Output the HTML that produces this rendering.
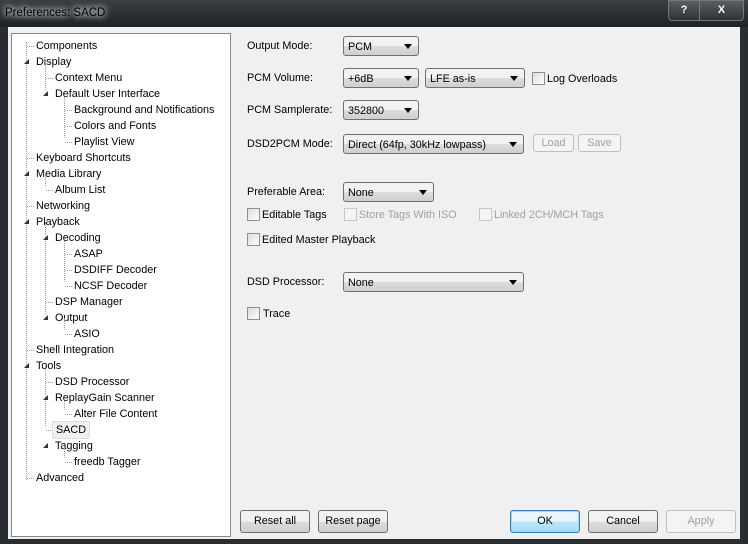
<!DOCTYPE html><html><head><style>
body{margin:0;width:748px;height:544px;overflow:hidden;background:#2a2d30;font-family:"Liberation Sans",sans-serif;font-size:10.8px;color:#000;position:relative}
.a{position:absolute;white-space:nowrap}
#title{left:0;top:0;width:748px;height:27px;background:linear-gradient(#3b3f44,#1e2124)}
#client{left:8px;top:27px;width:732px;height:512px;background:#f0f0f0}
#tree{left:11px;top:33px;width:218px;height:502px;background:#fff;border:1px solid #828790}
.t{position:absolute;white-space:nowrap;line-height:16px;height:16px}
.dv{position:absolute;border-left:1px dotted #999;width:0}
.dh{position:absolute;border-top:1px dotted #999;height:0}
.tri{position:absolute;width:0;height:0;border-left:5px solid transparent;border-bottom:5px solid #333}
.cb{position:absolute;width:11px;height:11px;border:1px solid #8e8f8f;background:linear-gradient(135deg,#dcdcdc,#fff)}
.cbd{border-color:#c8c8c8;background:#f4f4f4}
.dd{position:absolute;height:20px;border:1px solid #707070;border-radius:3px;background:linear-gradient(#f2f2f2 50%,#dddddd 50%,#cfcfcf);box-sizing:border-box;padding-left:4px;line-height:20px}
.dd:after{content:"";position:absolute;right:6px;top:7px;border-left:4px solid transparent;border-right:4px solid transparent;border-top:5px solid #000}
.btn{position:absolute;height:23px;border:1px solid #707070;border-radius:3px;background:linear-gradient(#f2f2f2 50%,#dddddd 50%,#cfcfcf);box-sizing:border-box;text-align:center;line-height:21px}
.dis{color:#a0a0a0;border-color:#c0c0c0;background:#f4f4f4}
</style></head><body>
<div class="a" id="title"></div>
<div class="a" style="left:5px;top:7px;color:#000;font-size:11.5px;text-shadow:0 0 6px #fff,0 0 8px #fff">Preferences: SACD</div>
<div class="a" style="left:668px;top:0;width:30px;height:19px;border:1px solid #777;border-radius:0 0 0 4px;background:linear-gradient(#5a5e63,#2f3236);color:#fff;text-align:center;font-weight:bold;line-height:18px">?</div>
<div class="a" style="left:699px;top:0;width:43px;height:19px;border:1px solid #777;border-radius:0 0 4px 0;background:linear-gradient(#5a5e63,#2f3236);color:#fff;text-align:center;font-weight:bold;line-height:18px">X</div>
<div class="a" id="client"></div>
<div class="a" id="tree">
<div class="t" style="left:24px;top:4px">Components</div>
<div class="t" style="left:24px;top:20px">Display</div>
<div class="t" style="left:43px;top:36px">Context Menu</div>
<div class="t" style="left:43px;top:52px">Default User Interface</div>
<div class="t" style="left:62px;top:68px">Background and Notifications</div>
<div class="t" style="left:62px;top:84px">Colors and Fonts</div>
<div class="t" style="left:62px;top:100px">Playlist View</div>
<div class="t" style="left:24px;top:116px">Keyboard Shortcuts</div>
<div class="t" style="left:24px;top:132px">Media Library</div>
<div class="t" style="left:43px;top:148px">Album List</div>
<div class="t" style="left:24px;top:164px">Networking</div>
<div class="t" style="left:24px;top:180px">Playback</div>
<div class="t" style="left:43px;top:196px">Decoding</div>
<div class="t" style="left:62px;top:212px">ASAP</div>
<div class="t" style="left:62px;top:228px">DSDIFF Decoder</div>
<div class="t" style="left:62px;top:244px">NCSF Decoder</div>
<div class="t" style="left:43px;top:260px">DSP Manager</div>
<div class="t" style="left:43px;top:276px">Output</div>
<div class="t" style="left:62px;top:292px">ASIO</div>
<div class="t" style="left:24px;top:308px">Shell Integration</div>
<div class="t" style="left:24px;top:324px">Tools</div>
<div class="t" style="left:43px;top:340px">DSD Processor</div>
<div class="t" style="left:43px;top:356px">ReplayGain Scanner</div>
<div class="t" style="left:62px;top:372px">Alter File Content</div>
<div class="t" style="left:40px;padding:0 3px;background:#f0f0f0;border:1px solid #ddd;border-radius:2px;top:387px">SACD</div>
<div class="t" style="left:43px;top:404px">Tagging</div>
<div class="t" style="left:62px;top:420px">freedb Tagger</div>
<div class="t" style="left:24px;top:436px">Advanced</div>
<div class="dv" style="left:14px;top:8px;height:438px"></div>
<div class="dv" style="left:33px;top:28px;height:28px"></div>
<div class="dv" style="left:52px;top:60px;height:44px"></div>
<div class="dv" style="left:33px;top:140px;height:12px"></div>
<div class="dv" style="left:33px;top:188px;height:92px"></div>
<div class="dv" style="left:52px;top:204px;height:44px"></div>
<div class="dv" style="left:52px;top:284px;height:12px"></div>
<div class="dv" style="left:33px;top:332px;height:60px"></div>
<div class="dv" style="left:52px;top:364px;height:12px"></div>
<div class="dv" style="left:52px;top:412px;height:12px"></div>
<div class="dh" style="left:15px;top:12px;width:7px"></div>
<div class="dh" style="left:15px;top:124px;width:7px"></div>
<div class="dh" style="left:15px;top:172px;width:7px"></div>
<div class="dh" style="left:15px;top:316px;width:7px"></div>
<div class="dh" style="left:15px;top:444px;width:7px"></div>
<div class="dh" style="left:34px;top:44px;width:7px"></div>
<div class="dh" style="left:34px;top:156px;width:7px"></div>
<div class="dh" style="left:34px;top:268px;width:7px"></div>
<div class="dh" style="left:34px;top:348px;width:7px"></div>
<div class="dh" style="left:34px;top:396px;width:5px"></div>
<div class="dh" style="left:53px;top:76px;width:7px"></div>
<div class="dh" style="left:53px;top:92px;width:7px"></div>
<div class="dh" style="left:53px;top:108px;width:7px"></div>
<div class="dh" style="left:53px;top:220px;width:7px"></div>
<div class="dh" style="left:53px;top:236px;width:7px"></div>
<div class="dh" style="left:53px;top:252px;width:7px"></div>
<div class="dh" style="left:53px;top:300px;width:7px"></div>
<div class="dh" style="left:53px;top:380px;width:7px"></div>
<div class="dh" style="left:53px;top:428px;width:7px"></div>
<div class="tri" style="left:12px;top:25px"></div>
<div class="tri" style="left:31px;top:57px"></div>
<div class="tri" style="left:12px;top:137px"></div>
<div class="tri" style="left:12px;top:185px"></div>
<div class="tri" style="left:31px;top:201px"></div>
<div class="tri" style="left:31px;top:281px"></div>
<div class="tri" style="left:12px;top:329px"></div>
<div class="tri" style="left:31px;top:361px"></div>
<div class="tri" style="left:31px;top:409px"></div>
</div>

<div class="a" style="left:247px;top:40px">Output Mode:</div>
<div class="dd" style="left:343px;top:36px;width:76px">PCM</div>
<div class="a" style="left:247px;top:72px">PCM Volume:</div>
<div class="dd" style="left:343px;top:68px;width:76px">+6dB</div>
<div class="dd" style="left:425px;top:68px;width:100px">LFE as-is</div>
<div class="cb" style="left:532px;top:72px"></div>
<div class="a" style="left:547px;top:73px">Log Overloads</div>
<div class="a" style="left:247px;top:104px">PCM Samplerate:</div>
<div class="dd" style="left:343px;top:100px;width:76px">352800</div>
<div class="a" style="left:247px;top:138px">DSD2PCM Mode:</div>
<div class="dd" style="left:343px;top:134px;width:181px">Direct (64fp, 30kHz lowpass)</div>
<div class="btn dis" style="left:533px;top:134px;width:41px;height:18px;line-height:16px">Load</div>
<div class="btn dis" style="left:578px;top:134px;width:43px;height:18px;line-height:16px">Save</div>
<div class="a" style="left:247px;top:186px">Preferable Area:</div>
<div class="dd" style="left:343px;top:182px;width:91px">None</div>
<div class="cb" style="left:247px;top:208px"></div>
<div class="a" style="left:262px;top:209px">Editable Tags</div>
<div class="cb cbd" style="left:344px;top:208px"></div>
<div class="a" style="left:359px;top:209px;color:#a0a0a0">Store Tags With ISO</div>
<div class="cb cbd" style="left:479px;top:208px"></div>
<div class="a" style="left:494px;top:209px;color:#a0a0a0">Linked 2CH/MCH Tags</div>
<div class="cb" style="left:247px;top:233px"></div>
<div class="a" style="left:262px;top:234px">Edited Master Playback</div>
<div class="a" style="left:247px;top:276px">DSD Processor:</div>
<div class="dd" style="left:343px;top:272px;width:181px">None</div>
<div class="cb" style="left:247px;top:307px"></div>
<div class="a" style="left:263px;top:308px">Trace</div>

<div class="btn" style="left:240px;top:510px;width:70px">Reset all</div>
<div class="btn" style="left:318px;top:510px;width:70px">Reset page</div>
<div class="btn" style="left:510px;top:510px;width:70px;border-color:#3c7fb1;background:linear-gradient(#eaf6fd 50%,#bee6fd 50%,#a7d9f5);box-shadow:0 0 0 1px #9cd9f7 inset">OK</div>
<div class="btn" style="left:588px;top:510px;width:70px">Cancel</div>
<div class="btn dis" style="left:666px;top:510px;width:70px">Apply</div>
</body></html>
